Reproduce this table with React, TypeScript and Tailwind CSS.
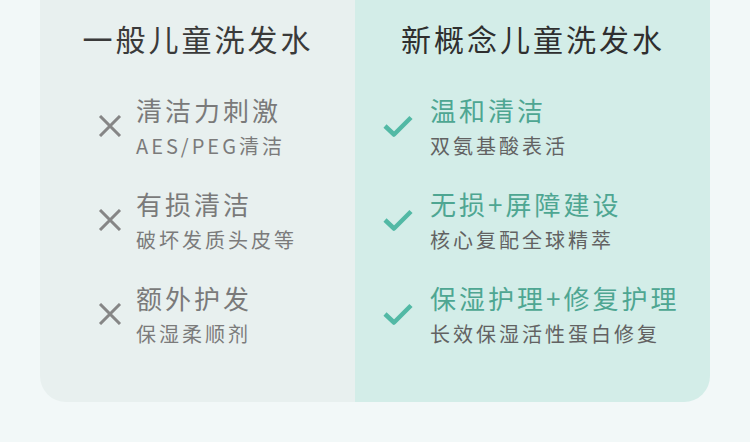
import React from 'react';

type Item = { title: string; sub: string };

const oldItems: Item[] = [
  { title: '清洁力刺激', sub: 'AES/PEG清洁' },
  { title: '有损清洁', sub: '破坏发质头皮等' },
  { title: '额外护发', sub: '保湿柔顺剂' },
];

const newItems: Item[] = [
  { title: '温和清洁', sub: '双氨基酸表活' },
  { title: '无损+屏障建设', sub: '核心复配全球精萃' },
  { title: '保湿护理+修复护理', sub: '长效保湿活性蛋白修复' },
];

const CrossIcon = () => (
  <svg width="24" height="22" viewBox="0 0 24 22" className="shrink-0">
    <path d="M2 1 L22 21 M22 1 L2 21" stroke="#868686" strokeWidth="3" fill="none" />
  </svg>
);

const CheckIcon = () => (
  <svg width="30" height="22" viewBox="0 0 30 22" className="shrink-0">
    <path d="M2 11 L11 19.5 L28 2.5" stroke="#52b9a5" strokeWidth="4.5" fill="none" strokeLinejoin="round" />
  </svg>
);

const App: React.FC = () => {
  return (
    <div
      className="w-[750px] h-[442px] bg-[#f2f8f8] px-[40px] overflow-hidden"
      style={{ fontFamily: '"Noto Sans CJK SC", "Noto Sans", sans-serif' }}
    >
      <div className="flex h-[402px] rounded-b-[26px] overflow-hidden">
        <div className="w-[315px] bg-[#e8f0ef] flex flex-col">
          <div className="h-[76px] flex items-center justify-center text-[30px] leading-none tracking-[3px] text-[#3a3a3a] pl-[1px]">
            一般儿童洗发水
          </div>
          <div className="flex flex-col pt-[16px]">
            {oldItems.map((it) => (
              <div key={it.title} className="h-[94px] flex items-start pl-[58px]">
                <div className="flex items-center gap-[14px]">
                  <CrossIcon />
                  <div className="flex flex-col">
                    <span className="text-[26px] leading-[36px] tracking-[3px] text-[#7a7a7a]">{it.title}</span>
                    <span className="mt-[4px] text-[20px] leading-[28px] tracking-[3px] text-[#7b7b7b]">{it.sub}</span>
                  </div>
                </div>
              </div>
            ))}
          </div>
        </div>
        <div className="w-[355px] bg-[#d3ede8] flex flex-col">
          <div className="h-[76px] flex items-center justify-center text-[30px] leading-none tracking-[3px] text-[#2f2f2f] pl-[1px]">
            新概念儿童洗发水
          </div>
          <div className="flex flex-col pt-[16px]">
            {newItems.map((it) => (
              <div key={it.title} className="h-[94px] flex items-start pl-[28px]">
                <div className="flex items-center gap-[17px]">
                  <CheckIcon />
                  <div className="flex flex-col">
                    <span className="text-[26px] leading-[36px] tracking-[3px] text-[#4ea692]">{it.title}</span>
                    <span className="mt-[4px] text-[20px] leading-[28px] tracking-[3px] text-[#626262]">{it.sub}</span>
                  </div>
                </div>
              </div>
            ))}
          </div>
        </div>
      </div>
    </div>
  );
};

export default App;
